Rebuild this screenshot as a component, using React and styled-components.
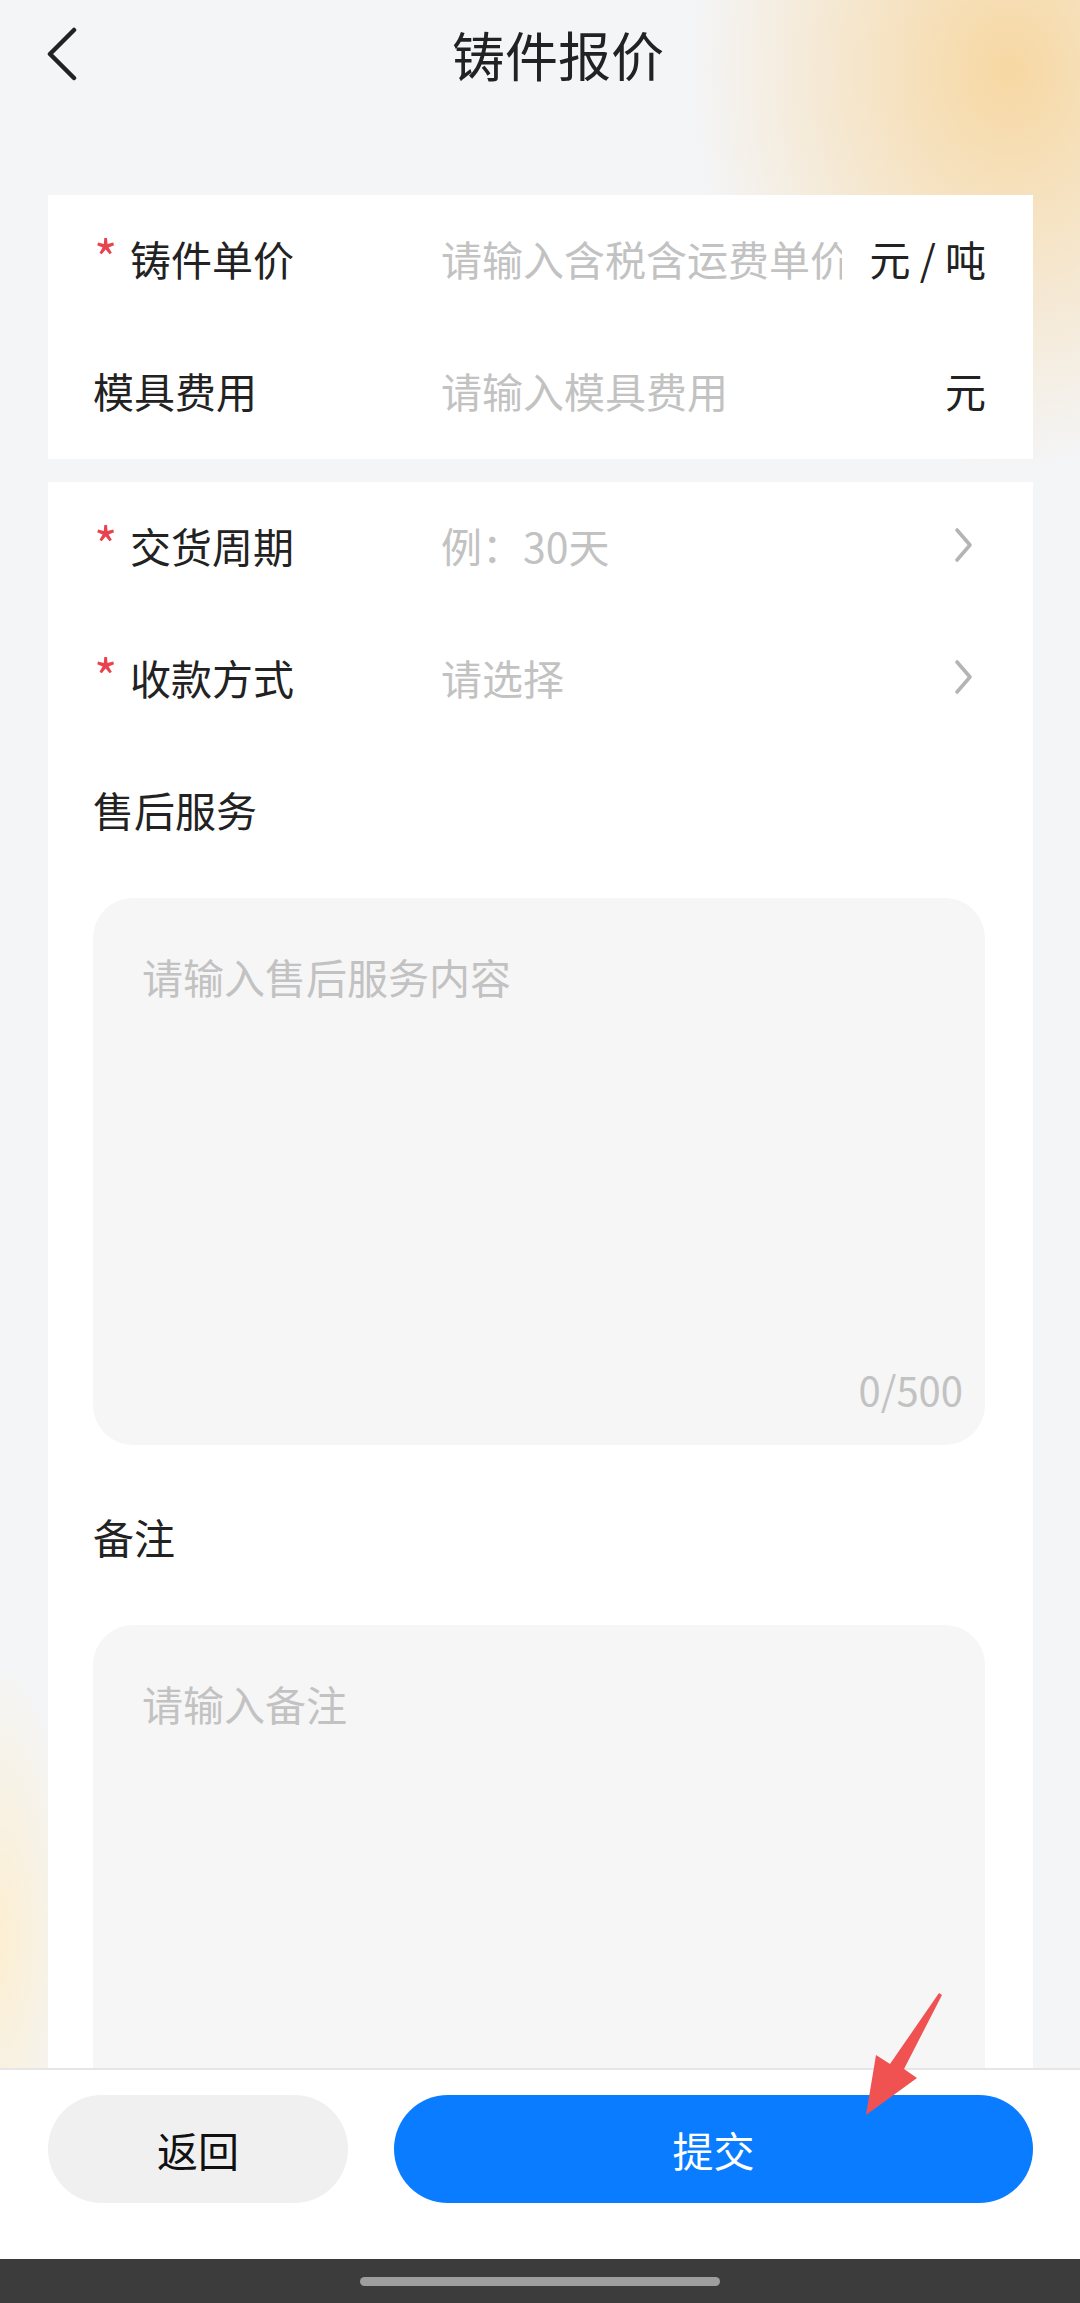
import React from "react";
import styled, { createGlobalStyle } from "styled-components";

const GlobalStyle = createGlobalStyle`
  html, body {
    margin: 0;
    padding: 0;
    height: 100%;
  }
  #root {
    height: 100%;
  }
  * {
    box-sizing: border-box;
  }
  body {
    font-family: "Noto Sans CJK SC", "Noto Sans", sans-serif;
  }
`;

const Page = styled.div`
  position: relative;
  height: 100vh;
  display: flex;
  flex-direction: column;
  overflow: hidden;
  background:
    radial-gradient(ellipse 320px 400px at 1010px 70px, rgba(247, 214, 158, 0.95), rgba(247, 214, 158, 0) 100%),
    radial-gradient(ellipse 80px 280px at 0px 1940px, rgba(253, 238, 205, 0.9), rgba(253, 238, 205, 0) 100%),
    #f4f5f7;
`;

const Header = styled.header`
  height: 108px;
  flex-shrink: 0;
  display: flex;
  align-items: center;
`;

const BackButton = styled.button`
  width: 96px;
  height: 100%;
  padding: 0 0 0 44px;
  border: none;
  background: transparent;
  display: flex;
  align-items: center;
`;

const Title = styled.h1`
  flex: 1;
  margin: 0;
  text-align: center;
  font-size: 53px;
  font-weight: 400;
  color: #222;
  padding-right: 60px;
`;

const Content = styled.main`
  flex: 1;
  min-height: 0;
  overflow: hidden;
  padding: 87px 47px 0 48px;
`;

const Card = styled.section`
  background: #fff;
  margin-bottom: 23px;
`;

const Row = styled.div`
  height: 132px;
  display: flex;
  align-items: center;
  padding: 0 47px 6px 45px;
  font-size: 41px;
`;

const Label = styled.div`
  width: 348px;
  flex-shrink: 0;
  display: flex;
  align-items: center;
  color: #222;
`;

const Star = styled.span`
  width: 37px;
  color: #e9434f;
  font-size: 50px;
  line-height: 1;
  padding: 0 0 4px 1px;
`;

const Input = styled.input`
  flex: 1;
  min-width: 0;
  border: none;
  outline: none;
  background: transparent;
  padding: 0;
  font-family: inherit;
  font-size: 41px;
  color: #333;
  &::placeholder {
    color: #c2c2c2;
  }
`;

const Unit = styled.span`
  margin-left: 28px;
  color: #222;
  white-space: pre;
`;

const Select = styled.div`
  flex: 1;
  color: #c2c2c2;
`;

const Chevron = styled.svg`
  width: 24px;
  height: 36px;
  margin-right: 10px;
  flex-shrink: 0;
`;

const SectionLabel = styled.div`
  height: 132px;
  display: flex;
  align-items: center;
  padding: 0 0 6px 45px;
  font-size: 41px;
  color: #222;
`;

const TextBox = styled.div`
  height: 547px;
  margin: 20px 48px 28px 45px;
  background: #f6f6f6;
  border-radius: 40px;
  display: flex;
  flex-direction: column;
  padding: 50px 22px 36px 49px;
`;

const TextArea = styled.textarea`
  flex: 1;
  resize: none;
  border: none;
  outline: none;
  background: transparent;
  padding: 0;
  font-family: inherit;
  font-size: 41px;
  line-height: 1.4;
  color: #333;
  &::placeholder {
    color: #c2c2c2;
  }
`;

const Counter = styled.span`
  align-self: flex-end;
  font-size: 40px;
  line-height: 1;
  color: #c2c2c2;
`;

const BottomBar = styled.footer`
  flex-shrink: 0;
  background: #fff;
  border-top: 2px solid #e6e6e6;
  padding: 25px 47px 56px 48px;
  display: flex;
  gap: 46px;
`;

const Button = styled.button`
  height: 108px;
  border: none;
  border-radius: 54px;
  font-family: inherit;
  font-size: 41px;
  width: ${(p) => (p.$primary ? "auto" : "300px")};
  flex: ${(p) => (p.$primary ? 1 : "none")};
  background: ${(p) => (p.$primary ? "#0a7cff" : "#f0f0f0")};
  color: ${(p) => (p.$primary ? "#fff" : "#111")};
`;

const NavBar = styled.div`
  height: 44px;
  flex-shrink: 0;
  background: #3c3c3c;
  display: flex;
  align-items: center;
  justify-content: center;
`;

const HomePill = styled.div`
  width: 360px;
  height: 9px;
  border-radius: 5px;
  background: #9e9e9e;
`;

const Arrow = styled.svg`
  position: absolute;
  left: 850px;
  top: 1985px;
  width: 100px;
  height: 140px;
  pointer-events: none;
`;

const RightChevron = () => (
  <Chevron viewBox="0 0 24 36">
    <path d="M5 3 L18 18 L5 33" fill="none" stroke="#b4b4b4" strokeWidth="3.6" strokeLinecap="round" strokeLinejoin="round" />
  </Chevron>
);

const Memo = ({ placeholder, counter }) => (
  <TextBox>
    <TextArea placeholder={placeholder} />
    {counter && <Counter>0/500</Counter>}
  </TextBox>
);

export default function App() {
  return (
    <Page>
      <GlobalStyle />
      <Header>
        <BackButton>
          <svg width="34" height="54" viewBox="0 0 34 54">
            <path d="M30 3 L6 27 L30 51" fill="none" stroke="#222" strokeWidth="4.5" strokeLinecap="round" strokeLinejoin="round" />
          </svg>
        </BackButton>
        <Title>铸件报价</Title>
      </Header>

      <Content>
        <Card>
          <Row>
            <Label>
              <Star>*</Star>铸件单价
            </Label>
            <Input placeholder="请输入含税含运费单价" />
            <Unit>元 / 吨</Unit>
          </Row>
          <Row>
            <Label>模具费用</Label>
            <Input placeholder="请输入模具费用" />
            <Unit>元</Unit>
          </Row>
        </Card>

        <Card>
          <Row>
            <Label>
              <Star>*</Star>交货周期
            </Label>
            <Select>例：30天</Select>
            <RightChevron />
          </Row>
          <Row>
            <Label>
              <Star>*</Star>收款方式
            </Label>
            <Select>请选择</Select>
            <RightChevron />
          </Row>
          <SectionLabel>售后服务</SectionLabel>
          <Memo placeholder="请输入售后服务内容" counter />
          <SectionLabel>备注</SectionLabel>
          <Memo placeholder="请输入备注" />
        </Card>
      </Content>

      <BottomBar>
        <Button>返回</Button>
        <Button $primary>提交</Button>
      </BottomBar>
      <NavBar>
        <HomePill />
      </NavBar>

      <Arrow viewBox="0 0 100 140">
        <polygon points="89,8 92,10 54,84 67,93 16,130 26,70 40,79" fill="#f05252" />
      </Arrow>
    </Page>
  );
}
